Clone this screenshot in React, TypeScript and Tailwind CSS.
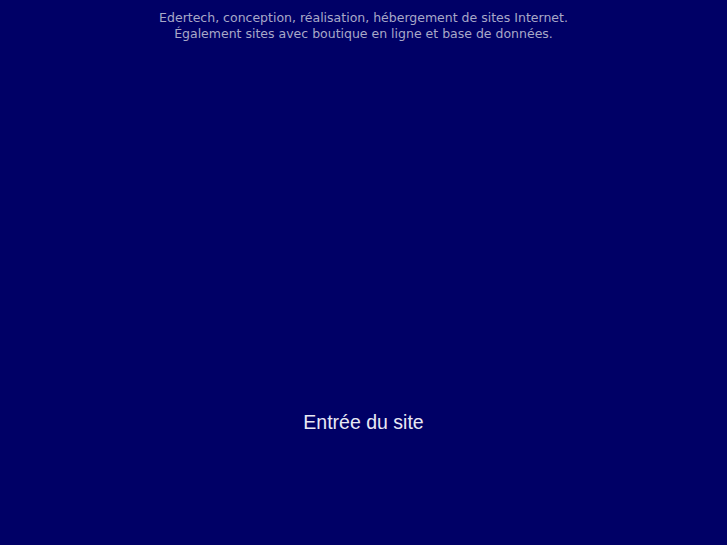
export default function App() {
  return (
    <div className="min-h-screen w-full bg-[#000066] flex flex-col items-center">
      <div className="pt-[10px] text-center text-[12.5px] leading-[16px] text-[#a8a8c8] font-['DejaVu_Sans',sans-serif]">
        <p>Edertech, conception, réalisation, hébergement de sites Internet.</p>
        <p>Également sites avec boutique en ligne et base de données.</p>
      </div>
      <a
        href="#"
        className="mt-[369px] text-[19.5px] leading-[22px] text-[#e8e8f4] font-['Liberation_Sans',Arial,sans-serif]"
      >
        Entrée du site
      </a>
    </div>
  );
}
